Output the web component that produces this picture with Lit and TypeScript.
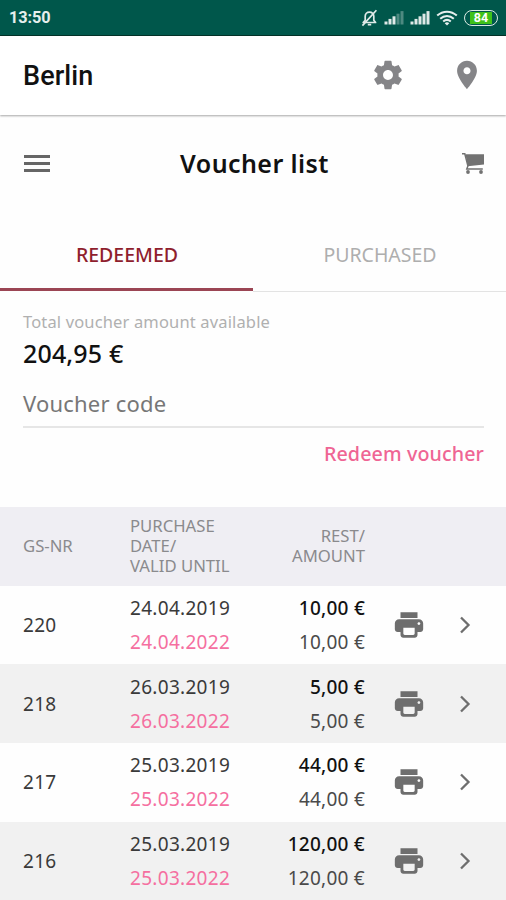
import { LitElement, html, css, svg } from "lit";
import { customElement } from "lit/decorators.js";

interface Voucher {
  nr: string;
  purchased: string;
  validUntil: string;
  rest: string;
  amount: string;
}

const VOUCHERS: Voucher[] = [
  { nr: "220", purchased: "24.04.2019", validUntil: "24.04.2022", rest: "10,00 €", amount: "10,00 €" },
  { nr: "218", purchased: "26.03.2019", validUntil: "26.03.2022", rest: "5,00 €", amount: "5,00 €" },
  { nr: "217", purchased: "25.03.2019", validUntil: "25.03.2022", rest: "44,00 €", amount: "44,00 €" },
  { nr: "216", purchased: "25.03.2019", validUntil: "25.03.2022", rest: "120,00 €", amount: "120,00 €" },
];

const signal = (lit: number) => html`<svg width="20" height="15" viewBox="0 0 20 15">
  ${[0, 1, 2, 3, 4].map(
    (i) => svg`<rect x=${i * 4 + 0.5} y=${11.5 - i * 2.6} width="3" height=${3 + i * 2.6} fill="#dfeae8" opacity=${i < lit ? 1 : 0.35}></rect>`
  )}
</svg>`;

const bellOff = html`<svg width="17" height="18" viewBox="0 0 17 18" fill="none" stroke="#dfeae8" stroke-width="1.7" stroke-linejoin="round">
  <path d="M2.2 13.5h12.4l-1.8-2.3V7.3c0-2.4-1.7-4.2-4.3-4.2S4.2 4.9 4.2 7.3v3.9z" />
  <path d="M6.8 15.6h3.4M15.4 1.2 1.4 16.6" />
</svg>`;

const wifi = html`<svg width="22" height="16" viewBox="0 0 22 16" fill="none" stroke="#e6efed" stroke-width="2">
  <path d="M1.2 5.6C6.8.3 15.2.3 20.800 5.6M4.2 8.700c4-3.7 9.6-3.7 13.6 0M7.2 11.6c2.3-2.1 5.3-2.1 7.6 0" />
  <path d="M11 15.6 8.7 13.2c1.4-1.2 3.2-1.2 4.6 0z" fill="#e6efed" stroke="none" />
</svg>`;

const gear = html`<svg width="34" height="34" viewBox="0 0 24 24" fill="#858588">
  <path d="M19.43 12.98c.04-.32.07-.64.07-.98s-.03-.66-.07-.98l2.11-1.65c.19-.15.24-.42.12-.64l-2-3.46c-.12-.22-.39-.3-.61-.22l-2.49 1c-.52-.4-1.08-.73-1.69-.98l-.38-2.65C14.46 2.18 14.25 2 14 2h-4c-.25 0-.46.18-.49.42l-.38 2.65c-.61.25-1.17.59-1.69.98l-2.49-1c-.23-.09-.49 0-.61.22l-2 3.46c-.13.22-.07.49.12.64l2.11 1.65c-.04.32-.07.65-.07.98s.03.66.07.98l-2.11 1.65c-.19.15-.24.42-.12.64l2 3.46c.12.22.39.3.61.22l2.49-1c.52.4 1.08.73 1.69.98l.38 2.65c.03.24.24.42.49.42h4c.25 0 .46-.18.49-.42l.38-2.65c.61-.25 1.17-.59 1.69-.98l2.49 1c.23.09.49 0 .61-.22l2-3.46c.12-.22.07-.49-.12-.64l-2.11-1.65zM12 15.5c-1.93 0-3.5-1.57-3.5-3.5s1.57-3.5 3.5-3.5 3.5 1.57 3.5 3.5-1.57 3.5-3.5 3.5z" />
</svg>`;

const pin = html`<svg width="34" height="34" viewBox="0 0 24 24" fill="#858588">
  <path d="M12 2C8.13 2 5 5.13 5 9c0 5.25 7 13 7 13s7-7.75 7-13c0-3.87-3.13-7-7-7zm0 9.5c-1.38 0-2.5-1.12-2.5-2.5s1.12-2.5 2.500-2.500 2.500 1.120 2.500 2.500-1.120 2.500-2.500 2.500z" />
</svg>`;

const cart = html`<svg width="24" height="24" viewBox="0 0 24 24">
  <path d="M4.5 2.3H23v10.2L6.7 14.2z" fill="#727272" />
  <path d="M1 1.7h2.8L6.9 13.9 5.8 17h16" fill="none" stroke="#727272" stroke-width="1.5" />
  <circle cx="7" cy="20" r="1.9" fill="#727272" />
  <circle cx="20" cy="20" r="1.9" fill="#727272" />
</svg>`;

const printer = html`<svg width="34" height="34" viewBox="0 0 24 24" fill="#6e6e6e">
  <path d="M19 8H5c-1.66 0-3 1.34-3 3v4c0 1.1.9 2 2 2h2v2c0 1.1.9 2 2 2h8c1.1 0 2-.9 2-2v-2h2c1.1 0 2-.9 2-2v-4c0-1.66-1.34-3-3-3zm-4 11H9c-.55 0-1-.45-1-1v-4h8v4c0 .55-.45 1-1 1zm4-7c-.55 0-1-.45-1-1s.45-1 1-1 1 .45 1 1-.45 1-1 1zM18 3H6v4h12z" />
</svg>`;

const chevron = html`<svg width="12" height="18" viewBox="0 0 12 18" fill="none" stroke="#6e6e6e" stroke-width="2.3">
  <path d="M2 1.500 9.500 9 2 16.500" />
</svg>`;

@customElement("voucher-row")
class VoucherRow extends LitElement {
  static properties = { voucher: { attribute: false } };
  declare voucher: Voucher;

  static styles = css`
    :host {
      display: grid;
      grid-template-columns: 107px 120px 115px 88px 1fr;
      align-items: center;
      height: 78.7px;
      padding-left: 23px;
      box-sizing: border-box;
      font-size: 19px;
      letter-spacing: 0.3px;
      line-height: 34px;
      color: #3a3a3a;
    }
    svg { display: block; }
    .until { color: #f56fa0; }
    .sums { text-align: right; letter-spacing: 0.25px; }
    .rest { color: #111; font-weight: 500; }
    .amount { color: #4a4a4a; }
    .print { justify-self: center; }
    .open { padding-left: 6px; }
  `;

  render() {
    const v = this.voucher;
    return html`
      <div class="nr">${v.nr}</div>
      <div class="dates"><div>${v.purchased}</div><div class="until">${v.validUntil}</div></div>
      <div class="sums"><div class="rest">${v.rest}</div><div class="amount">${v.amount}</div></div>
      <div class="print">${printer}</div>
      <div class="open">${chevron}</div>
    `;
  }
}

@customElement("app-root")
class AppRoot extends LitElement {
  static styles = css`
    :host {
      display: flex;
      flex-direction: column;
      width: 506px;
      height: 900px;
      overflow: hidden;
      background: #fefefe;
      font-family: "Noto Sans", "Open Sans", sans-serif;
      color: #111;
    }
    svg { display: block; }
    .status {
      display: flex;
      align-items: center;
      justify-content: space-between;
      flex: none;
      height: 36px;
      box-sizing: border-box;
      padding: 0 8px 0 9px;
      background: #00574b;
      border-bottom: 1.5px solid #043328;
      color: #e6efed;
      font: 700 16.3px Roboto, sans-serif;
      letter-spacing: -0.1px;
    }
    .tray { display: flex; align-items: center; gap: 6px; }
    .battery {
      display: flex;
      width: 34px;
      height: 16px;
      box-sizing: border-box;
      border: 1.5px solid #dcebe3;
      border-radius: 8px;
      padding: 1px 5px;
    }
    .charge {
      flex: 1;
      background: #3fc11a;
      color: #fff;
      font: 700 12.5px/11px Roboto, sans-serif;
      text-align: center;
      letter-spacing: 0;
    }
    .appbar {
      display: flex;
      align-items: center;
      flex: none;
      height: 79px;
      box-sizing: border-box;
      padding: 0 22px 0 23px;
      background: #fff;
      box-shadow: 0 1px 2px rgba(0, 0, 0, 0.35);
      font: 500 27px Roboto, sans-serif;
    }
    .city { flex: 1; letter-spacing: 0.1px; }
    .tools { display: flex; gap: 45px; padding-bottom: 2px; }
    .titlebar {
      display: grid;
      grid-template-columns: 1fr auto 1fr;
      align-items: center;
      flex: none;
      height: 97px;
      padding: 0 21px 0 24px;
    }
    .menu { display: grid; gap: 4.5px; width: 26px; }
    .menu i { height: 2.5px; background: #666; }
    .title { font-weight: 600; font-size: 25px; letter-spacing: 0.42px; padding-bottom: 2px; }
    .cart { justify-self: end; }
    .tabs { display: flex; flex: none; height: 80px; box-sizing: border-box; }
    .tab {
      flex: 1;
      display: flex;
      justify-content: center;
      padding-top: 28px;
      padding-left: 1px;
      box-sizing: border-box;
      font-size: 19.5px;
      line-height: 30px;
      color: #aeaeae;
      border-bottom: 1.5px solid #e3e3e3;
    }
    .tab.active { color: #8f1e2e; font-weight: 500; border-bottom: 3px solid #9b4554; height: 79px; }
    .form { flex: none; height: 214.5px; padding: 18px 22px 0 23px; box-sizing: border-box; }
    .hint { font-size: 16.5px; line-height: 24px; color: #b0b0b0; letter-spacing: 0.15px; }
    .total { font-size: 25px; line-height: 36px; padding-top: 1px; font-weight: 500; letter-spacing: 0.15px; }
    .code {
      font-size: 22px;
      line-height: 30px;
      padding: 17px 0 8px;
      color: #777;
      border-bottom: 2px solid #e6e6e6;
      letter-spacing: 0.2px;
    }
    .redeem { text-align: right; font-size: 19.7px; line-height: 30px; padding-top: 11px; color: #ef6594; font-weight: 500; letter-spacing: 0.1px; }
    .thead {
      display: grid;
      grid-template-columns: 107px 120px 115px;
      align-items: center;
      flex: none;
      height: 79px;
      padding-left: 23px;
      background: #efeef3;
      color: #8a8a8d;
      font-size: 16.7px;
      line-height: 20.3px;
    }
    .right { text-align: right; }
    voucher-row { flex: none; }
    voucher-row:nth-of-type(even) { background: #f1f1f1; }
  `;

  render() {
    return html`
      <div class="status">
        <span>13:50</span>
        <div class="tray">${bellOff}${signal(3)}${signal(5)}${wifi}<div class="battery"><span class="charge">84</span></div></div>
      </div>
      <div class="appbar">
        <span class="city">Berlin</span>
        <div class="tools">${gear}${pin}</div>
      </div>
      <div class="titlebar">
        <div class="menu"><i></i><i></i><i></i></div>
        <div class="title">Voucher list</div>
        <div class="cart">${cart}</div>
      </div>
      <div class="tabs">
        <div class="tab active">REDEEMED</div>
        <div class="tab">PURCHASED</div>
      </div>
      <div class="form">
        <div class="hint">Total voucher amount available</div>
        <div class="total">204,95 €</div>
        <div class="code">Voucher code</div>
        <div class="redeem">Redeem voucher</div>
      </div>
      <div class="thead">
        <div>GS-NR</div>
        <div>PURCHASE<br />DATE/<br />VALID UNTIL</div>
        <div class="right">REST/<br />AMOUNT</div>
      </div>
      ${VOUCHERS.map((v) => html`<voucher-row .voucher=${v}></voucher-row>`)}
    `;
  }
}
